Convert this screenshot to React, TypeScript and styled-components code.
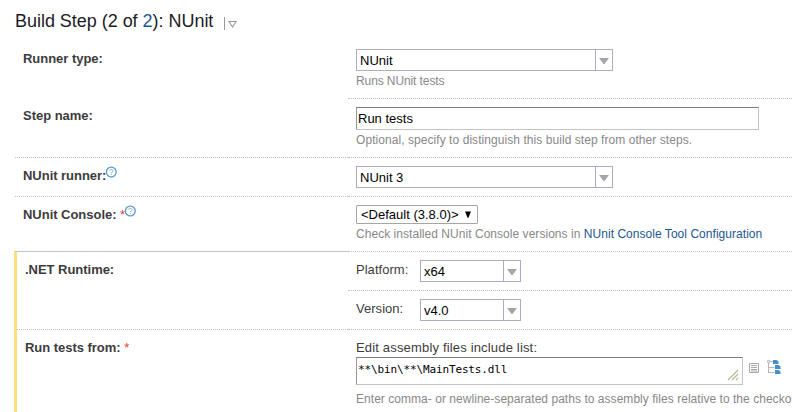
import React from "react";
import styled, { createGlobalStyle } from "styled-components";

const GlobalStyle = createGlobalStyle`
  * { box-sizing: border-box; }
  html, body { margin: 0; background: #fff; overflow: hidden; }
  body { font-family: "Liberation Sans", Arial, sans-serif; font-size: 13px; line-height: 16px; color: #333; }
`;

const Page = styled.main`
  width: 792px;
  height: 412px;
  overflow: hidden;
`;

const Title = styled.h2`
  display: flex;
  height: 40px;
  margin: 0;
  padding: 9px 0 0 15px;
  font-size: 18px;
  line-height: 24px;
  font-weight: 400;
  letter-spacing: -0.03px;
  color: #1c1c24;
  white-space: pre;
`;

const Link = styled.a`
  color: #1d5791;
  text-decoration: none;
`;

const TitleMenu = styled.svg`
  width: 15px;
  height: 14px;
  margin: 8px 0 0 10px;
`;

const Row = styled.section<{ $h: number; $changed?: boolean }>`
  display: grid;
  grid-template-columns: ${(p) => (p.$changed ? 331 : 333)}px 1fr;
  height: ${(p) => p.$h}px;
  margin-left: ${(p) => (p.$changed ? 0 : 15)}px;
`;

const ChangedGroup = styled.div`
  margin: -1px 0 0 14px;
  padding-top: 1px;
  border-left: 3px solid #ffdf7f;
`;

const Label = styled.div<{ $top: number; $line?: "dotted" | "solid" }>`
  display: flex;
  padding: ${(p) => p.$top}px 0 0 8px;
  border-bottom: ${(p) => (p.$line ? `1px ${p.$line} #c3c3c3` : "0")};
  font-weight: 700;
  letter-spacing: -0.03px;
  color: #3c3c3c;
  white-space: pre;
`;

const Field = styled.div<{ $top: number; $line?: boolean }>`
  padding: ${(p) => p.$top}px 0 0 8px;
  border-bottom: ${(p) => (p.$line ? "1px dotted #c3c3c3" : "0")};
  white-space: nowrap;
`;

const SubField = styled(Field)`
  height: 39px;
`;

const Note = styled.p<{ $gap?: number; $spacing?: number }>`
  margin: ${(p) => p.$gap ?? 2}px 0 0;
  font-size: 12px;
  line-height: 16px;
  letter-spacing: ${(p) => p.$spacing ?? 0.04}px;
  color: #888;
`;

const Required = styled.span`
  font-weight: 400;
  color: #f0382c;
`;

const Combo = styled.div<{ $w: number }>`
  display: flex;
  width: ${(p) => p.$w}px;
  height: 22px;
  border: 1px solid #abadc7;
  color: #000;
`;

const ComboValue = styled.div`
  flex: 1;
  padding: 3px 0 0 3px;
`;

const ComboButton = styled.div`
  display: flex;
  width: 17px;
  padding-top: 1px;
  align-items: center;
  justify-content: center;
  border-left: 1px solid #abadc7;
`;

const TextBox = styled.div`
  width: 403px;
  height: 23px;
  padding: 3px 1px;
  border: 1px solid #c3c3c3;
  border-top-color: #7c7c7c;
  border-left-color: #999;
  color: #000;
`;

const NativeSelect = styled.div`
  display: flex;
  width: 122px;
  height: 19px;
  padding: 1px 5px 0 4px;
  border: 1px solid #a6a6a6;
  border-radius: 1px;
  justify-content: space-between;
  color: #000;
`;

const Inline = styled.div`
  display: grid;
  grid-template-columns: 64px auto;
  justify-content: start;
`;

const InlineLabel = styled.span`
  padding-top: 2px;
  letter-spacing: 0.03px;
  color: #3c3c3c;
`;

const AreaCaption = styled.div`
  height: 17px;
  letter-spacing: 0.17px;
  color: #3c3c3c;
`;

const AreaLine = styled.div`
  display: flex;
`;

const TextArea = styled.div`
  display: flex;
  justify-content: space-between;
  align-items: flex-end;
  width: 387px;
  height: 28px;
  padding: 3px 3px 3px 1px;
  border: 1px solid #c3c3c3;
  border-top-color: #7c7c7c;
  border-left-color: #999;
  font: 11px/14px "DejaVu Sans Mono", monospace;
  letter-spacing: -0.13px;
  color: #000;
`;

const Code = styled.span`
  align-self: flex-start;
  margin-top: 2px;
`;

const AreaIcons = styled.div`
  display: flex;
  gap: 6px;
  padding: 2px 0 0 5px;
`;

const Help = styled.svg`
  width: 12px;
  height: 12px;
  flex: none;
  margin: -2px 0 0 -1px;
`;

const HelpIcon = () => (
  <Help viewBox="0 0 12 12" fill="none" stroke="#5a9bcd">
    <circle cx="6.3" cy="6" r="4.9" strokeWidth="1.3" />
    <path d="M4.5 4.9c0-2 3.5-2 3.5 0 0 1.3-1.7 1-1.7 2.3M6.3 8v1" strokeWidth="1" opacity=".75" />
  </Help>
);

const ComboBox = ({ value, width }: { value: string; width: number }) => (
  <Combo $w={width}>
    <ComboValue>{value}</ComboValue>
    <ComboButton>
      <svg width="10" height="6" viewBox="0 0 10 6"><path d="M0 0h10L5.5 6h-1z" fill="#a6a6a6" /></svg>
    </ComboButton>
  </Combo>
);

const ListIcon = () => (
  <svg width="13" height="18" viewBox="0 0 13 18" fill="none" stroke="#aaa">
    <path d="M1.5 4.5h9v9h-9zM3 6.5h6M3 8.5h6M3 10.5h6M3 12h6" />
  </svg>
);

const TreeIcon = () => (
  <svg width="16" height="18" viewBox="0 0 16 18" fill="none">
    <path d="M1.5 3v11M1.5 8.5h6M1.5 13.5h6M2 2.5h4" stroke="#b8b8b8" />
    <circle cx="1.6" cy="2.5" r="1.2" stroke="#aaa" fill="#fff" />
    <path d="M6 1h3.5l2 1.4V5H6zM8 6h3.5l2 1.4V10H8zM8 11h3.5l2 1.4V15H8z" fill="#428fcb" />
  </svg>
);

export default function App() {
  return (
    <Page>
      <GlobalStyle />
      <Title>
        <span>Build Step (2 of <Link>2</Link>): NUnit</span>
        <TitleMenu viewBox="0 0 15 14" fill="none" stroke="#999">
          <path d="M1.5 0v13" />
          <path d="M6 4.5h7L9.5 10z" strokeWidth="1.1" />
        </TitleMenu>
      </Title>
      <Row $h={59}>
        <Label $top={11}>Runner type:</Label>
        <Field $top={9} $line>
          <ComboBox value="NUnit" width={257} />
          <Note $spacing={-0.1}>Runs NUnit tests</Note>
        </Field>
      </Row>
      <Row $h={59}>
        <Label $top={9} $line="dotted">Step name:</Label>
        <Field $top={8} $line>
          <TextBox>Run tests</TextBox>
          <Note $spacing={0.06}>Optional, specify to distinguish this build step from other steps.</Note>
        </Field>
      </Row>
      <Row $h={39}>
        <Label $top={10} $line="dotted">NUnit runner:<HelpIcon /></Label>
        <Field $top={8} $line><ComboBox value="NUnit 3" width={257} /></Field>
      </Row>
      <Row $h={55}>
        <Label $top={10} $line="solid">NUnit Console: <Required>*</Required><HelpIcon /></Label>
        <Field $top={8} $line>
          <NativeSelect>
            <span>&lt;Default (3.8.0)&gt;</span>
            <svg width="8" height="16" viewBox="0 0 8 16"><path d="M1 4.5h6L4.3 11h-.6z" fill="#000" /></svg>
          </NativeSelect>
          <Note>Check installed NUnit Console versions in <Link>NUnit Console Tool Configuration</Link></Note>
        </Field>
      </Row>
      <ChangedGroup>
        <Row $h={78} $changed>
          <Label $top={10} $line="dotted">.NET Runtime:</Label>
          <div>
            <SubField $top={8} $line>
              <Inline><InlineLabel>Platform:</InlineLabel><ComboBox value="x64" width={101} /></Inline>
            </SubField>
            <SubField $top={8} $line>
              <Inline><InlineLabel>Version:</InlineLabel><ComboBox value="v4.0" width={101} /></Inline>
            </SubField>
          </div>
        </Row>
        <Row $h={82} $changed>
          <Label $top={10}>Run tests from: <Required>*</Required></Label>
          <Field $top={10}>
            <AreaCaption>Edit assembly files include list:</AreaCaption>
            <AreaLine>
              <TextArea>
                <Code>**\bin\**\MainTests.dll</Code>
                <svg width="12" height="12" viewBox="0 0 12 12" stroke="#b8b89a" strokeWidth="1.3"><path d="M1 11 11 1M5 11l6-6M9 11l2-2" /></svg>
              </TextArea>
              <AreaIcons>
                <ListIcon />
                <TreeIcon />
              </AreaIcons>
            </AreaLine>
            <Note $gap={6}>Enter comma- or newline-separated paths to assembly files relative to the checkout</Note>
          </Field>
        </Row>
      </ChangedGroup>
    </Page>
  );
}
